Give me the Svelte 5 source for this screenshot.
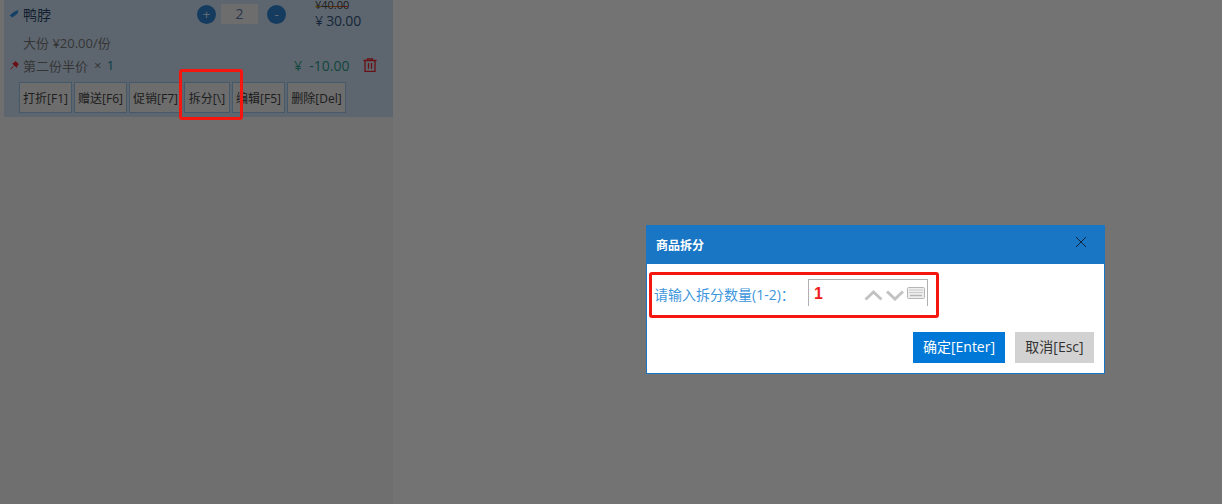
<script>
    let qty = 2;
    let splitQty = 1;
    const actions = ['打折[F1]', '赠送[F6]', '促销[F7]', '拆分[\\]', '编辑[F5]', '删除[Del]'];
</script>

<div class="page">
    <aside class="side">
        <div class="item">
            <div class="row name_row">
                <svg class="tag" viewBox="0 0 10 10" width="10" height="10">
                    <path d="M0.5 6.5 L5.5 2.5 L9.5 1 L8.5 4.5 L3.5 8.5 Z" fill="#2f8fe0" />
                </svg>
                <span class="name">鸭脖</span>
                <div class="stepper">
                    <button class="round">+</button>
                    <span class="qty">{qty}</span>
                    <button class="round minus">-</button>
                </div>
                <div class="prices">
                    <span class="old">¥40.00</span>
                    <span class="now">¥ 30.00</span>
                </div>
            </div>
            <div class="spec">大份 ¥20.00/份</div>
            <div class="row promo_row">
                <svg class="pin" viewBox="0 0 10 10" width="9" height="9">
                    <path d="M6 0.5 L9.5 3.5 L8 4.5 L7.5 7 L3 3 L5 2 Z M4 5.5 L0.8 9.2" fill="#e8252f" stroke="#e8252f" stroke-width="1" />
                </svg>
                <span class="promo">第二份半价</span>
                <span class="times">× <b>1</b></span>
                <span class="discount">¥&nbsp; -10.00</span>
                <svg class="trash" viewBox="0 0 14 14" width="14" height="14" fill="none" stroke="#e8252f" stroke-width="1.3">
                    <path d="M0.5 2.5 H13.5 M4.5 2.5 V0.8 H9.5 V2.5 M2 2.5 V13.3 H12 V2.5 M5.5 5 V10.8 M8.5 5 V10.8" />
                </svg>
            </div>
            <div class="actions">
                {#each actions as a}
                    <button class="act">{a}</button>
                {/each}
            </div>
        </div>
    </aside>
</div>

<div class="mask"></div>

<div class="dialog">
    <div class="dialog_head">
        <span>商品拆分</span>
        <svg viewBox="0 0 12 12" width="12" height="12" fill="none" stroke="#10233a" stroke-width="1">
            <path d="M1 1 L11 11 M11 1 L1 11" />
        </svg>
    </div>
    <div class="dialog_body">
        <label for="split">请输入拆分数量(1-2)：</label>
        <div class="num_input">
            <input id="split" value={splitQty} />
            <svg class="arrows" viewBox="0 0 40 12" width="40" height="12" fill="none" stroke="#c2c2c2" stroke-width="3">
                <path d="M1.5 10.5 L9.5 3 L17.5 10.5 M23 2.5 L31 10 L39 2.5" />
            </svg>
            <svg class="kbd" viewBox="0 0 18 12" width="18" height="12">
                <rect x="0.5" y="0.5" width="17" height="11" rx="1" fill="#eee" stroke="#b5b5b5" />
                <path d="M2.5 3 H15.5 M2.5 5.5 H15.5" stroke="#a8a8a8" stroke-width="1" stroke-dasharray="1 1" />
                <path d="M3 8.5 H15" stroke="#b5b5b5" stroke-width="1.5" />
            </svg>
        </div>
    </div>
    <div class="dialog_foot">
        <button class="ok">确定[Enter]</button>
        <button class="cancel">取消[Esc]</button>
    </div>
</div>

<div class="mark mark_btn"></div>
<div class="mark mark_form"></div>

<style>
    :global(body) {
        margin: 0;
        font-family: "Open Sans", "Noto Sans CJK SC", sans-serif;
    }

    .page {
        width: 1222px;
        height: 504px;
        overflow: hidden;
        background: #fff;
    }

    .side {
        width: 389px;
        height: 504px;
        padding-left: 4px;
        background: #f6f6f6;
    }

    .item {
        height: 117px;
        background: #cfe3f7;
        position: relative;
    }

    .row {
        display: flex;
        align-items: center;
    }

    .name_row {
        height: 28px;
        padding-left: 5px;
    }

    .tag {
        margin-right: 4px;
    }

    .name {
        font-size: 14px;
        color: #2a4666;
        width: 174px;
    }

    .stepper {
        display: flex;
        align-items: center;
        gap: 5px;
    }

    .round {
        width: 19px;
        height: 19px;
        padding: 0;
        border: 0;
        border-radius: 50%;
        background: #2f86d2;
        color: #dbe9f6;
        font-size: 13px;
        line-height: 19px;
        font-family: inherit;
    }

    .minus {
        margin-left: 4px;
    }

    .qty {
        width: 37px;
        height: 20px;
        line-height: 20px;
        text-align: center;
        background: #f2f2f2;
        color: #5c7ca8;
        font-size: 14px;
    }

    .prices {
        display: flex;
        flex-direction: column;
        align-self: flex-start;
        margin-left: 29px;
    }

    .old {
        font-size: 11px;
        line-height: 10px;
        color: #444;
        background: linear-gradient(to right, #e0b000, #f03030) no-repeat 0 6px / 100% 1px;
        width: 33px;
        white-space: nowrap;
    }

    .now {
        font-size: 14px;
        line-height: 20px;
        margin-top: 1px;
        letter-spacing: -0.2px;
        color: #34557c;
        white-space: nowrap;
    }

    .spec {
        font-size: 13px;
        line-height: 20px;
        color: #777;
        padding-left: 19px;
        margin-top: 5px;
    }

    .promo_row {
        height: 24px;
        padding-left: 5px;
    }

    .pin {
        margin: 0 4px 0 1px;
        flex: none;
    }

    .promo {
        font-size: 13px;
        color: #777;
        width: 71px;
    }

    .times {
        font-size: 13px;
        color: #777;
        white-space: nowrap;
        width: 24px;
    }

    .times b {
        font-weight: 400;
        color: #15858f;
        margin-left: 2px;
    }

    .discount {
        font-size: 14px;
        color: #2a9c88;
        margin-left: 176px;
        width: 69px;
        white-space: nowrap;
    }

    .actions {
        display: grid;
        grid-template-columns: 53px 53px 53px 46px 53px 59px;
        gap: 2px;
        padding: 5px 0 0 15px;
    }

    .act {
        height: 31px;
        padding: 0;
        border: 1px solid #9cc6ea;
        background: #f1f1f1;
        color: #444;
        font-size: 12px;
        font-family: inherit;
        white-space: nowrap;
    }

    .mask {
        position: fixed;
        inset: 0;
        background: rgba(0, 0, 0, 0.55);
    }

    .dialog {
        position: fixed;
        left: 646px;
        top: 225px;
        width: 459px;
        height: 149px;
        box-sizing: border-box;
        background: #fff;
        border: 1px solid #1976c5;
        border-top: 0;
    }

    .dialog_head {
        height: 39px;
        background: #1976c5;
        color: #fff;
        font-size: 12px;
        font-weight: 700;
        display: flex;
        align-items: center;
        justify-content: space-between;
        padding: 0 18px 0 10px;
        margin: 0 -1px;
    }

    .dialog_head svg {
        margin-top: -5px;
    }

    .dialog_body {
        display: flex;
        align-items: flex-start;
        height: 68px;
        box-sizing: border-box;
        padding: 15px 0 0 7px;
    }

    .dialog_body label {
        font-size: 14px;
        line-height: 31px;
        color: #3d96dc;
        width: 154px;
        white-space: nowrap;
    }

    .num_input {
        width: 120px;
        height: 27px;
        box-sizing: border-box;
        border: 1px solid #b0b0b0;
        border-bottom: 0;
        display: flex;
        align-items: center;
    }

    .num_input input {
        width: 50px;
        border: 0;
        outline: 0;
        padding: 2px 0 0 5px;
        color: #f01a1a;
        font-size: 16px;
        font-weight: 700;
        font-family: "Liberation Sans", sans-serif;
        background: transparent;
    }

    .arrows {
        margin-top: 4px;
    }

    .kbd {
        margin-left: 3px;
    }

    .dialog_foot {
        display: flex;
        justify-content: flex-end;
        gap: 10px;
        padding-right: 10px;
    }

    .dialog_foot button {
        height: 31px;
        border: 0;
        padding: 0 0 3px;
        font-size: 14px;
        font-family: inherit;
    }

    .ok {
        width: 92px;
        background: #0078d7;
        color: #fff;
    }

    .cancel {
        width: 79px;
        background: #d2d2d2;
        color: #333;
    }

    .mark {
        position: fixed;
        box-sizing: border-box;
        border: 3px solid #f5170f;
        border-radius: 3px;
    }

    .mark_btn {
        left: 179px;
        top: 69px;
        width: 64px;
        height: 51px;
    }

    .mark_form {
        left: 649px;
        top: 272px;
        width: 290px;
        height: 46px;
    }
</style>
